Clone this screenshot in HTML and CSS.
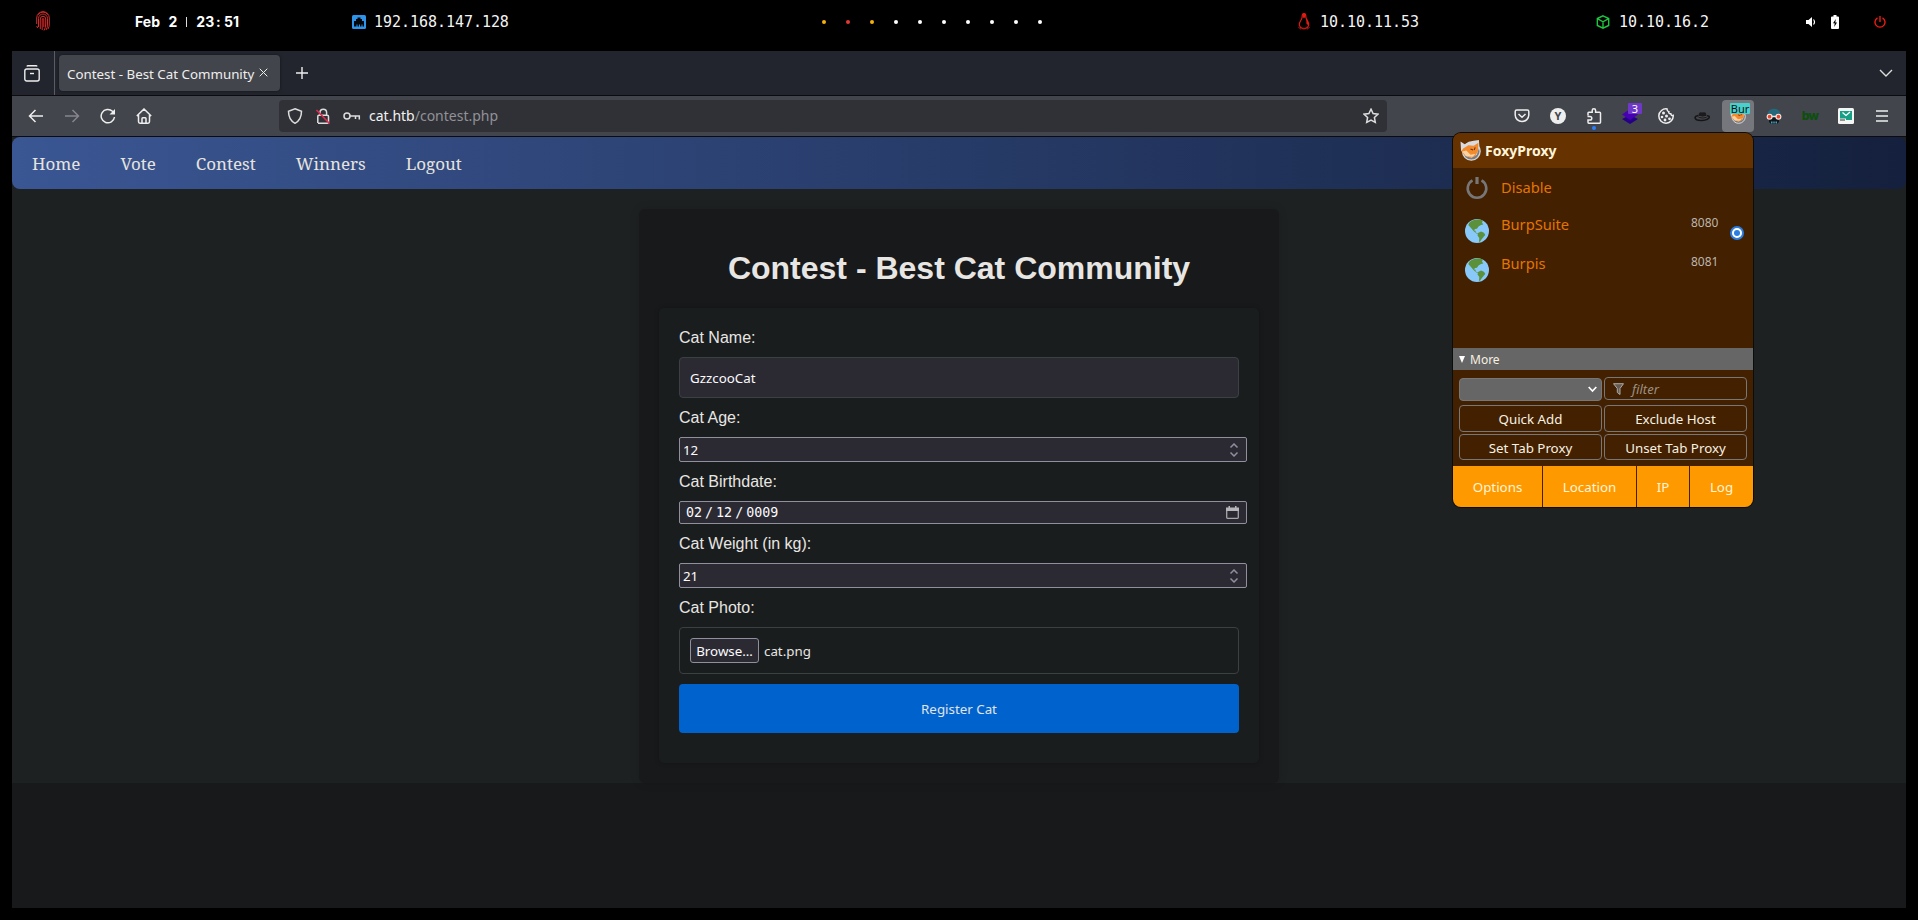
FILE: index.html
```html
<!DOCTYPE html>
<html lang="en">
<head>
<meta charset="utf-8">
<title>Contest - Best Cat Community</title>
<link rel="stylesheet" href="styles.css">
</head>
<body>
<svg width="0" height="0" class="defs">
  <symbol id="fox" viewBox="0 0 20 20">
    <circle cx="10.800" cy="10.800" r="8.400" fill="#777c85" stroke="#d8d8d8" stroke-width="1.200"/>
    <path d="M.5 1.500l4 2.500Q8 1 13 .8L18 0l.5 6.500L16 14l-5 3-6-2-4-5z" fill="#d9dbe0"/>
    <path d="M3 8l5-3 5 .5 4.500-3-.3 8-2.700 5-5 1.500L4 14l-2.500-3.500z" fill="#f28a2e"/>
    <path d="M2 11l4-1 4 4 5-1-3 3-6-.5z" fill="#ffd2a0"/>
    <path d="M10 8.500l2.500 1M14.500 7L13.500 9.500" stroke="#6a3510" stroke-width="1"/>
  </symbol>
  <symbol id="globe" viewBox="0 0 24 24">
    <circle cx="12" cy="12" r="12" fill="#88c9f9"/>
    <path d="M4.500 3.500C7 1 11 0 14.500.5l3.500 1-1 2 1.300 2-2.300.6-2.500 1.400-1.500 2.200-2 .2-1 1.500 1.500.3.3 1.800 2.200 1-.8.600L9 12.500 5.500 8.500 3.300 6z" fill="#5c913b"/>
    <path d="M13 14l3-1.500 3 1.200 1.300 2.300-1.800 2-2 2.500-1.700 2.500-.8-.5.300-3.500-1.800-2.500z" fill="#5c913b"/>
  </symbol>
  <symbol id="spin" viewBox="0 0 10 14"><path d="M1.500 4.500L5 1l3.500 3.500M1.500 9.500L5 13l3.500-3.500" fill="none" stroke="#8f8f9d" stroke-width="1.500"/></symbol>
</svg>

<header class="desk">
  <svg class="finger" viewBox="0 0 14 20" fill="none" stroke="#d62a2a" stroke-width="1"><path d="M.7 13V7a6.300 6.300 0 0112.600 0v6q0 3-1.300 5M2.500 16V7.500a4.500 4.500 0 019 0V13q0 4-1.500 6M4.300 18V8a2.700 2.700 0 015.400 0v5q0 4-1.700 6.500M6.200 19V8q.8-1.500 1.600 0v8M.7 15l1 2M2 3.500q5-5 10 0"/></svg>
  <span class="clock"><span>Feb</span><span>2</span><i></i><span>23</span><span>:</span><span>51</span></span>
  <svg class="eth" viewBox="0 0 14 14"><rect width="14" height="14" rx="1.500" fill="#2e94ea"/><path d="M2 11.500V6h2V4h1.500V2.500h3V4H10v2h2v5.500h-1.500V9.500h-1v2H8v-2H7v2H5.500v-2h-1v2z" fill="#02060b"/></svg>
  <span class="ip ip-a">192.168.147.128</span>
  <div class="dots"><b class="y"></b><b class="r"></b><b class="y"></b><b></b><b></b><b></b><b></b><b></b><b></b><b></b></div>
  <svg class="tux" viewBox="0 0 13 18" fill="none" stroke="#e01b12" stroke-width="1.200"><path d="M4.500 4q0-3.400 2-3.400t2 3.400q0 2 1.500 4t1.500 5q-1 3-3.500 3.300H5Q2.500 16 1.500 13q0-3 1.500-5t1.500-4z"/><path d="M5 .6h3V5H5zM9 5l2 4-.5 4L9 11z" fill="#e01b12" stroke="none"/><path d="M.5 15l3 2.200M12.500 15l-3 2.200M5 17h3" stroke="#8d120c"/></svg>
  <span class="ip ip-b">10.10.11.53</span>
  <svg class="cube" viewBox="0 0 14 14" fill="none" stroke="#1fc43f" stroke-width="1.400"><path d="M7 .8l5.700 2.700v7L7 13.200 1.300 10.500v-7zM1.300 3.700L7 6.800l5.700-3.100M7 6.800v6.400"/></svg>
  <span class="ip ip-c">10.10.16.2</span>
  <svg class="vol" viewBox="0 0 10 12" fill="#fff"><path d="M0 4h2.500L6 1v10L2.500 8H0z"/><path d="M7.500 3.500q2 2.500 0 5" fill="none" stroke="#fff" stroke-width="1.200"/></svg>
  <svg class="bat" viewBox="0 0 8 14"><path d="M2.500 0h3v1.500H7q1 0 1 1V13q0 1-1 1H1q-1 0-1-1V2.500q0-1 1-1h1.500z" fill="#fff"/><path d="M4.800 4L2 8.300h1.700L3.200 12 6 7.500H4.300z" fill="#000"/></svg>
  <svg class="pow" viewBox="0 0 12 12" fill="none" stroke="#f01c12" stroke-width="1.400"><path d="M3.500 1.800a5 5 0 105 0M6 0v6"/></svg>
</header>

<main class="window">
  <div class="tabs">
    <div class="tabview"><svg width="16" height="17" viewBox="0 0 16 17" fill="none" stroke="#eee" stroke-width="1.400"><path d="M3 1.500q.2-.8 1-.8h8q.8 0 1 .8"/><rect x=".8" y="4" width="14.400" height="12" rx="2"/><path d="M6 8.500h4"/></svg></div>
    <div class="tab"><span>Contest - Best Cat Community</span><svg width="9" height="9" viewBox="0 0 9 9" stroke="#eee"><path d="M.7.7l7.600 7.600M8.300.7L.7 8.300"/></svg></div>
    <svg class="plus" viewBox="0 0 12 12" stroke="#eee" stroke-width="1.400"><path d="M6 0v12M0 6h12"/></svg>
    <svg class="chev" viewBox="0 0 14 8" fill="none" stroke="#ddd" stroke-width="1.400"><path d="M1 1l6 6 6-6"/></svg>
  </div>

  <div class="toolbar">
    <div class="navbtns">
      <svg viewBox="0 0 16 16"><path d="M15 8H1.500M7.500 2L1.500 8l6 6"/></svg>
      <svg viewBox="0 0 16 16" class="dim"><path d="M1 8h13.500M8.500 2l6 6-6 6"/></svg>
      <svg viewBox="0 0 16 16"><path d="M14.500 9A6.700 6.700 0 1112.500 3.300L14 4.800"/><path d="M15 1v5.500H9.500z" fill="#eee" stroke="none"/></svg>
      <svg viewBox="0 0 16 16"><path d="M.8 8L8 1l7.200 7M2.500 7v6.500q0 1.700 1.500 1.700h8q1.500 0 1.500-1.700V7M6 15v-4.500q0-.8.800-.8h2.400q.8 0 .8.800V15"/></svg>
    </div>
    <div class="url">
      <svg viewBox="0 0 16 16"><path d="M8 .8l6.500 2.500Q14.500 12 8 15.300 1.500 12 1.500 3.300z"/></svg>
      <svg viewBox="0 0 16 16"><path d="M5 7V4.500a3.300 3.300 0 016.600 0V7M2.800 15V8.500q0-1.300 1-1.300h8.500q1.200 0 1.200 1.300v5.200q0 1.500-1.200 1.500H3"/><path d="M1.500 2l13 13.500" stroke="#e22850" stroke-width="1.600"/></svg>
      <svg viewBox="0 0 18 16" class="key"><circle cx="4" cy="8" r="3"/><path d="M7 8h9.300v3.500M12.500 8v3"/></svg>
      <p>cat.htb<span>/contest.php</span></p>
      <svg viewBox="0 0 16 16" class="star"><path d="M8 1.200l2.100 4.300 4.800.7-3.500 3.300.9 4.900L8 12.100l-4.300 2.300.9-4.900L1.100 6.200l4.800-.7z"/></svg>
    </div>
    <div class="exts">
      <div><svg viewBox="0 0 16 16"><path d="M2.700 2h10.600q1.500 0 1.500 1.500V7a6.800 6.500 0 01-13.600 0V3.500Q1.200 2 2.700 2zM4.500 6L8 9.300 11.500 6"/></svg></div>
      <div><span class="yy">Y</span></div>
      <div class="puzzle"><svg viewBox="0 0 16 16"><path d="M2 7.500V5q0-.8.800-.8h3.400V2.500a1.700 1.700 0 013.400 0v1.700h4q.9 0 .9.900v9.200q0 .9-.9.900H2.800q-.8 0-.8-.9V12h2a1.800 1.800 0 000-3.600H1.500"/></svg></div>
      <div class="badge3"><svg viewBox="0 0 16 16" class="fill"><path d="M8 7l8 4-8 5-8-5z" fill="#250087"/><path d="M8 1l8 5.500L8 12 0 6.500z" fill="#4800b5"/></svg><em>3</em></div>
      <div><svg viewBox="0 0 16 16"><path d="M9 .9a7.200 7.200 0 106.200 6.500q-2 .7-2.400-1.700-2.400.2-2-2Q9 3.300 9 .9z"/><g fill="#eee" stroke="none"><circle cx="5.500" cy="5" r="1.500"/><circle cx="4" cy="9" r="1.300"/><circle cx="8.500" cy="8" r="1.500"/><circle cx="7" cy="12" r="1.400"/><circle cx="11.500" cy="10.800" r="1.400"/></g></svg></div>
      <div><svg viewBox="0 0 16 16" class="fill"><path d="M4.500 7.500Q1 8 1 9.800q.8 3 7 2.700 6.500-.6 7.300-3.300.2-1.500-2.300-1.500" fill="none" stroke="#151515"/><path d="M4.500 9.500l.3-3.500Q5.300 3.500 8 4.500q3.500-1 4 1l.8 4Q9 11.300 4.500 9.500z" fill="#1b1b1d"/><path d="M4.800 8.300q4 1.600 7.800 0" fill="none" stroke="#55565c" stroke-width=".8"/></svg></div>
      <div class="active"><svg viewBox="0 0 20 20" class="fill"><use href="#fox"/></svg><em>Bur</em></div>
      <div><svg viewBox="0 0 16 16" class="fill"><path d="M1.500 8Q1 1 8 .8 15 1 14.500 8z" fill="#24697b"/><path d="M3 8h10v6l-2 2H5l-2-2z" fill="#101820"/><circle cx="3.600" cy="8.700" r="3" fill="#f3e7e2"/><circle cx="12.400" cy="8.700" r="3" fill="#f3e7e2"/><circle cx="3.600" cy="8.700" r="1.900" fill="#e4452d"/><circle cx="12.400" cy="8.700" r="1.900" fill="#e4452d"/><path d="M5.500 8.500h5" stroke="#f3e7e2"/><path d="M5 14.500h1.500M7.300 14.500h1.400M9.500 14.500H11" stroke="#4aa4bb" stroke-width="2"/></svg></div>
      <div><span class="bw">bw</span></div>
      <div><svg viewBox="0 0 16 16" class="fill"><rect width="16" height="16" rx="1.500" fill="#f5f5f5"/><path d="M2 3h12v9H8v-1.500H2z" fill="#16a085"/><path d="M4.500 4.500L8 7.500l4-3.500" fill="none" stroke="#fff" stroke-width="1.300"/><path d="M2 12h5" stroke="#555" stroke-width="1.200"/></svg></div>
      <div><svg viewBox="0 0 12 12" class="menu"><path d="M0 1h12M0 6h12M0 11h12"/></svg></div>
    </div>
  </div>

  <section class="page">
    <nav class="nav"><a>Home</a><a>Vote</a><a>Contest</a><a>Winners</a><a>Logout</a></nav>
    <div class="container">
      <h1>Contest - Best Cat Community</h1>
      <form class="form">
        <label>Cat Name:</label>
        <div class="field name">GzzcooCat</div>
        <label>Cat Age:</label>
        <div class="field num">12<svg width="10" height="14"><use href="#spin"/></svg></div>
        <label>Cat Birthdate:</label>
        <div class="field date"><span>02</span>/<span>12</span>/<span>0009</span><svg width="13" height="13" viewBox="0 0 13 13"><path d="M.7 3v8.500q0 .8.800.8h10q.8 0 .8-.8V3" fill="none" stroke="#a5a5aa" stroke-width="1.300"/><path d="M0 1.500h13V5H0zM2.500 0h1.500v2H2.500zM9 0h1.500v2H9z" fill="#b5b5ba"/></svg></div>
        <label>Cat Weight (in kg):</label>
        <div class="field num">21<svg width="10" height="14"><use href="#spin"/></svg></div>
        <label>Cat Photo:</label>
        <div class="field file"><span class="browse">Browse…</span>cat.png</div>
        <div class="submit">Register Cat</div>
      </form>
    </div>
  </section>

  <aside class="popup">
    <div class="p-head"><svg width="21" height="21"><use href="#fox"/></svg>FoxyProxy</div>
    <div class="p-list">
      <div class="p-row"><svg width="24" height="24" viewBox="0 0 24 24" fill="none" stroke="#777" stroke-width="2.600" class="p-pow"><path d="M7.500 4.300a9.300 9.300 0 109 0"/><path d="M12 1v7" stroke-width="3.200"/></svg><span>Disable</span></div>
      <div class="p-row p-one"><svg width="24" height="24"><use href="#globe"/></svg><span>BurpSuite</span><small>8080</small><u></u></div>
      <div class="p-row p-two"><svg width="24" height="24"><use href="#globe"/></svg><span>Burpis</span><small>8081</small></div>
    </div>
    <div class="p-more"><svg width="6" height="7" viewBox="0 0 6 7"><path d="M0 0h6L3 7z" fill="#fff"/></svg>More</div>
    <div class="p-tools">
      <div class="p-select"><svg width="9" height="7" viewBox="0 0 9 7" fill="none" stroke="#fff" stroke-width="1.700"><path d="M.7 1l3.800 4L8.300 1"/></svg></div>
      <div class="p-filter"><svg width="11" height="12" viewBox="0 0 11 12"><path d="M.5.700h10L7 5.500v6L4.300 9.500v-4z" fill="#665a50" stroke="#aaa"/></svg><i>filter</i></div>
      <div class="p-btn">Quick Add</div><div class="p-btn">Exclude Host</div>
      <div class="p-btn low">Set Tab Proxy</div><div class="p-btn low">Unset Tab Proxy</div>
    </div>
    <div class="p-foot"><a>Options</a><a>Location</a><a>IP</a><a>Log</a></div>
  </aside>
</main>
</body>
</html>
```
FILE: styles.css
```css
* { box-sizing: border-box; }
body { margin: 0; width: 1918px; height: 920px; overflow: hidden; background: #000; color: #eee; font-family: "Noto Sans", sans-serif; }
svg { flex: none; display: block; }
.defs { position: absolute; }

.desk { height: 51px; display: flex; align-items: center; padding: 0 0 8px 36px; color: #f4f4f4; }
.finger { width: 14px; height: 20px; margin-top: -2px; }
.clock { margin-left: 85px; width: 104px; display: flex; align-items: center; font: 700 14px Inter, sans-serif; white-space: nowrap; color: #fff; }
.clock span:nth-child(1) { width: 34px; }
.clock span:nth-child(2) { width: 18px; }
.clock i { width: 1px; height: 10px; margin-right: 9px; background: #ddd; }
.clock span:nth-child(4) { width: 20px; }
.clock span:nth-child(5) { width: 8px; }
.eth { width: 14px; height: 14px; margin-left: 113px; }
.ip { font: 15px "DejaVu Sans Mono", monospace; letter-spacing: -0.04px; white-space: nowrap; transform: scaleY(1.06); }
.ip-a { margin-left: 8px; width: 136px; }
.dots { display: flex; gap: 20px; margin-left: 312px; }
.dots b { width: 4px; height: 4px; border-radius: 2px; background: #fff; }
.dots .y { background: #f5b20a; }
.dots .r { background: #e53935; }
.tux { width: 14px; height: 17px; margin-left: 255px; }
.ip-b { margin-left: 9px; width: 100px; }
.cube { width: 14px; height: 14px; margin-left: 176px; }
.ip-c { margin-left: 9px; width: 91px; }
.vol { width: 10px; height: 12px; margin-left: 96px; }
.bat { width: 8px; height: 14px; margin-left: 15px; }
.pow { width: 12px; height: 12px; margin-left: 35px; }

.window { position: relative; margin-left: 12px; width: 1894px; height: 857px; background: #18191b; display: flex; flex-direction: column; }
.tabs { height: 45px; background: #23252e; border-bottom: 1px solid #0c0c10; display: flex; align-items: center; }
.tabview { width: 43px; height: 44px; border-right: 1px solid #5b5c63; display: flex; align-items: center; padding-left: 12px; }
.tab { width: 221px; height: 36px; margin-left: 4px; border-radius: 4px; background: #43454c; box-shadow: 0 0 3px #0008; display: flex; align-items: center; justify-content: space-between; padding: 2px 12px 0 8px; font-size: 13.33px; color: #eee; white-space: nowrap; }
.tab svg { margin-top: -3px; }
.plus { width: 12px; height: 12px; margin-left: 16px; }
.chev { width: 14px; height: 8px; margin-left: auto; margin-right: 13px; }

.toolbar { height: 41px; background: #43454c; border-bottom: 1px solid #0c0c10; display: flex; align-items: center; }
.toolbar svg { width: 16px; height: 16px; fill: none; stroke: #eee; stroke-width: 1.5; }
.toolbar svg.fill { stroke: none; }
.toolbar svg.dim { stroke: #85868b; }
.navbtns { display: flex; gap: 20px; width: 267px; padding-left: 16px; }
.url { width: 1108px; height: 32px; background: #303136; border-radius: 4px; display: flex; align-items: center; padding: 0 8px; gap: 12px; }
.url svg { stroke: #ddd; }
.toolbar .url .key { width: 18px; }
.url p { margin: -2px auto 0 -4px; font-size: 14px; color: #f2f2f2; }
.url p span { color: #919196; }
.exts { display: flex; margin-left: 119px; gap: 4px; }
.exts div { position: relative; width: 32px; height: 32px; display: flex; align-items: center; justify-content: center; }
.exts em { position: absolute; font-style: normal; font-size: 11px; line-height: 11px; text-align: center; }
.yy { width: 16px; height: 16px; border-radius: 8px; background: #eee; color: #43454c; font: 700 11px/16px "Noto Sans", sans-serif; text-align: center; }
.puzzle::after { content: ""; position: absolute; left: 14px; bottom: 2px; width: 4px; height: 4px; border-radius: 2px; background: #2a7fff; }
.badge3 em { left: 14px; top: 3px; width: 14px; height: 11px; background: #7038c8; color: #fff; border-radius: 1px; }
.active { background: #75777c; border-radius: 4px; }
.active em { left: 8px; top: 3px; width: 20px; height: 11px; background: #48d1cc; color: #111; border-radius: 1px; }
.bw { font: 800 12px/16px Inter, sans-serif; color: #0b4f0d; letter-spacing: -0.8px; }
.toolbar .menu { width: 12px; height: 12px; stroke-width: 1.3; }

.page { height: 646px; background: #1e2122; }
.nav { height: 52px; border-radius: 8px; background: linear-gradient(90deg, #3a5693, #14203d); display: flex; align-items: center; padding: 1px 0 0; }
.nav a { padding: 0 20px; font: 17px "Noto Serif", "DejaVu Serif Condensed", "DejaVu Serif", serif; color: #e6e3de; }
.container { width: 640px; height: 574px; margin: 20px auto 0; padding: 41px 20px 20px; background: #18191b; border-radius: 6px; box-shadow: 0 0 10px #0002; }
h1 { margin: 0 0 22px; font: 700 32px/36px "Liberation Sans", sans-serif; text-align: center; color: #e8e6e3; }
.form { height: 455px; background: #1a1d1e; border-radius: 5px; box-shadow: 0 0 5px #0003; padding: 21px 20px 20px; font-size: 13.33px; }
.form label { display: block; font: 16px/18px "Liberation Sans", sans-serif; color: #e8e6e3; }
.field { background: #2b2a33; color: #fbfbfe; display: flex; align-items: center; border: 1px solid #8f8f9d; border-radius: 2px; }
.field svg { margin-left: auto; }
.form .name { margin: 10px 0 11px; height: 41px; border-color: #3b4042; border-radius: 4px; padding: 1px 10px 0; }
.num { width: 568px; height: 25px; margin: 10px 0 11px; padding: 0 7px 0 3px; }
.date { width: 568px; height: 23px; margin: 10px 0 11px; padding: 0 7px 0 6px; font: 13.33px "DejaVu Sans Mono", monospace; gap: 3px; }
.form .file { margin-top: 10px; height: 47px; background: none; border-color: #3b4042; border-radius: 4px; padding: 0 10px; color: #e8e6e3; gap: 5px; }
.browse { width: 69px; height: 25px; border: 1px solid #8f8f9d; border-radius: 3px; background: #2b2a33; color: #fbfbfe; text-align: center; line-height: 24px; }
.submit { height: 49px; margin-top: 10px; background: #0062cc; border-radius: 4px; display: flex; align-items: center; justify-content: center; color: #e0e4e8; padding-top: 1px; }

.popup { position: absolute; left: 1441px; top: 82px; width: 300px; height: 374px; background: #422000; border-radius: 8px; box-shadow: 0 0 0 1px #0b0c0e; overflow: hidden; display: flex; flex-direction: column; font-size: 13.33px; color: #f7f1e2; }
.p-head { height: 35px; background: #663300; display: flex; align-items: center; padding-left: 7px; gap: 4px; font-weight: 700; font-size: 14px; color: #fff5d9; }
.p-list { height: 180px; padding-top: 8px; }
.p-row { position: relative; height: 38px; padding: 0 12px; display: flex; font-size: 14.67px; line-height: 22px; color: #e57500; }
.p-row span { margin-left: 12px; width: 190px; flex: none; }
.p-one svg, .p-two svg { margin-top: 5px; }
.p-one { height: 39px; }
.p-one span, .p-two span { margin-top: -1px; }
.p-row small { width: 28px; flex: none; font-size: 12px; line-height: 18px; color: #bdb5ad; }
.p-row u { flex: none; width: 14px; height: 14px; border-radius: 7px; background: #fff; border: 2px solid #2a7de1; margin: 12px 0 0 11px; display: flex; }
.p-row u::after { content: ""; width: 6px; height: 6px; margin: 2px; border-radius: 3px; background: #2a7de1; }
.p-more { height: 22px; background: #666; display: flex; align-items: center; gap: 5px; padding-left: 6px; font-size: 12px; }
.p-tools { height: 96px; padding: 7px 6px 0; display: grid; grid-template-columns: 143px 143px; grid-template-rows: 25px 27px 26px; column-gap: 2px; row-gap: 3px; font-size: 13.33px; }
.p-select, .p-filter, .p-btn { border: 1px solid #777; border-radius: 4px; display: flex; align-items: center; }
.p-select { background: #666; justify-content: flex-end; padding-right: 4px; margin-top: 1px; height: 23px; }
.p-filter { padding-left: 8px; gap: 8px; height: 23px; font-size: 13px; color: #9d9083; }
.p-btn { justify-content: center; padding-top: 1px; }
.low { margin-top: -1px; height: 26px; padding-top: 2px; }
.p-foot { flex: 1; display: flex; background: #ff9900; }
.p-foot a { display: flex; align-items: center; justify-content: center; border-left: 1px solid #422000; padding-top: 1px; color: #fff5d9; }
.p-foot a:nth-child(1) { width: 89px; border: 0; }
.p-foot a:nth-child(2) { width: 94px; }
.p-foot a:nth-child(3) { width: 53px; }
.p-foot a:nth-child(4) { width: 64px; }
```
